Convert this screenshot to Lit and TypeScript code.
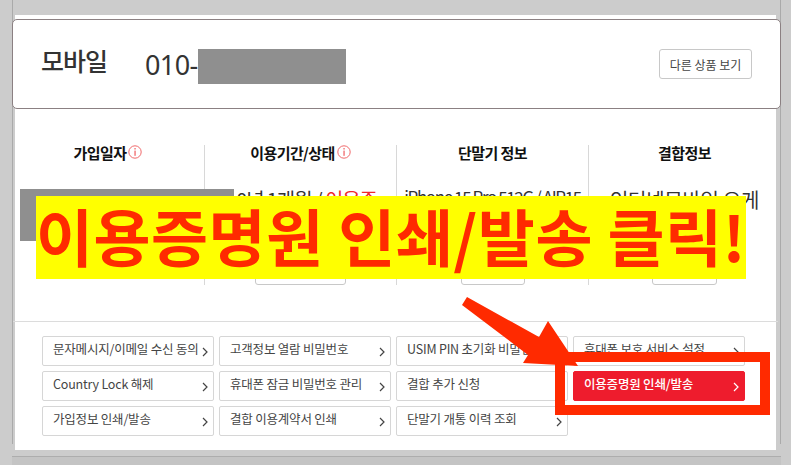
import { LitElement, html, css } from "lit";
import { customElement } from "lit/decorators.js";

const INFO = html`<svg class="info" viewBox="0 0 14 14" width="14" height="14"><circle cx="7" cy="7" r="6.2" fill="none" stroke="#f0696b" stroke-width="1"/><rect x="6.4" y="3" width="1.3" height="1.5" fill="#f0696b"/><rect x="6.4" y="5.6" width="1.3" height="5.2" fill="#f0696b"/></svg>`;
const CHEVRON = html`<svg class="chev" viewBox="0 0 6 10" width="6" height="10"><path d="M1 1l4 4-4 4" fill="none" stroke="currentColor" stroke-width="1.2"/></svg>`;

const ROWS: [string, boolean?][] = [
  ["문자메시지/이메일 수신 동의"], ["고객정보 열람 비밀번호"], ["USIM PIN 초기화 비밀번호"], ["휴대폰 보호 서비스 설정"],
  ["Country Lock 해제"], ["휴대폰 잠금 비밀번호 관리"], ["결합 추가 신청"], ["이용증명원 인쇄/발송", true],
  ["가입정보 인쇄/발송"], ["결합 이용계약서 인쇄"], ["단말기 개통 이력 조회"],
];

@customElement("app-root")
export class AppRoot extends LitElement {
  static styles = css`
    :host { display: block; width: 791px; height: 465px; background: #ccc; position: relative; overflow: hidden; font-family: "Noto Sans CJK KR", "Noto Sans", sans-serif; color: #333; }
    .frame { width: 769px; height: 444px; margin-left: 12px; border-left: 1px solid #aaa; border-right: 1px solid #aaa; box-sizing: border-box; padding: 15px 4px 0 2px; }
    .card { background: #fff; height: 435px; display: flex; flex-direction: column; }
    .head { margin: 4px -5px 0 -3px; height: 90px; flex: none; box-sizing: border-box; border: 1px solid #8b8082; border-radius: 5px; display: flex; align-items: center; padding: 0 28px 0 28px; background: #fff; }
    .head h1 { margin: 0 22px 9px 0; font-size: 25px; font-weight: 500; letter-spacing: -1px; color: #333; width: 82px; white-space: nowrap; }
    .num { font-size: 27px; line-height: 35px; letter-spacing: -0.6px; color: #333; font-family: "Noto Sans", sans-serif; display: flex; align-items: center; margin: 4px 0 0 0; }
    .num span { padding-bottom: 4px; }
    .mask { display: block; width: 148px; height: 35px; background: #8f8f8f; }
    .other { margin-left: auto; width: 93px; height: 30px; box-sizing: border-box; border: 1px solid #c8c8c8; border-radius: 3px; font-size: 12px; display: flex; align-items: center; justify-content: center; color: #444; background: #fff; }
    .cols { display: grid; grid-template-columns: 189px 192px 192px 1fr; margin-top: 36px; height: 140px; flex: none; }
    .col { border-left: 1px solid #d8d8d8; display: flex; flex-direction: column; align-items: center; position: relative; min-width: 0; }
    .col:first-child { border-left: none; padding-right: 3px; }
    .col:last-child { padding-left: 4px; }
    .col h2 { margin: -2px 0 0; font-size: 15px; line-height: 20px; font-weight: 700; color: #111; letter-spacing: -0.6px; display: flex; gap: 2px; align-items: flex-start; white-space: nowrap; }
    .info { margin-top: 2px; }
    .val { margin-top: 23px; font-size: 20px; line-height: 28px; white-space: nowrap; letter-spacing: -1.1px; color: #333; }
    .val em { color: #f0262c; font-style: normal; }
    .val.period { margin-left: 12px; }
    .val.small { margin-top: 20px; font-size: 17px; letter-spacing: -1.4px; }
    .val.wide { letter-spacing: -0.3px; }
    .ghost { position: absolute; bottom: 0; height: 40px; border: 1px solid #c8c8c8; border-radius: 3px; box-sizing: border-box; background: #fff; }
    .blur { position: absolute; left: 5px; top: 44px; width: 214px; height: 52px; background: #8f8f8f; z-index: 2; }
    .actions { border-top: 1px solid #dcdcdc; margin: 36px -2px 0 -2px; padding: 14px 31px 0 29px; display: grid; grid-template-columns: repeat(4, 172px); grid-auto-rows: 30px; gap: 5px; }
    .btn { box-sizing: border-box; border: 1px solid #d6d6d6; border-radius: 2px; display: flex; align-items: center; justify-content: space-between; padding: 0 5px 0 10px; font-size: 12.5px; letter-spacing: -0.2px; color: #444; white-space: nowrap; overflow: hidden; background: #fff; }
    .btn span { padding-bottom: 6px; }
    .btn.on { background: #ee1c2d; border-color: #ee1c2d; color: #fff; font-weight: 500; }
    .chev { flex: none; color: #444; margin-top: 2px; }
    .on .chev { color: #fff; }
    .foot { position: absolute; left: 12px; right: 10px; top: 456px; bottom: 0; background: #c4c4c4; border-top: 1px solid #adadad; }
    .banner { position: absolute; left: 36px; top: 196px; width: 710px; height: 83px; background: #ff0; color: #ff2a00; font-size: 62px; font-weight: 700; line-height: 79px; text-align: center; white-space: nowrap; letter-spacing: 0.5px; overflow: hidden; z-index: 3; }
    .ann { position: absolute; left: 0; top: 0; z-index: 4; pointer-events: none; }
  `;
  render() {
    return html`
      <div class="frame"><div class="card">
        <div class="head">
          <h1>모바일</h1>
          <div class="num"><span>010-</span><div class="mask"></div></div>
          <div class="other">다른 상품 보기</div>
        </div>
        <div class="cols">
          <div class="col"><h2>가입일자${INFO}</h2><div class="blur"></div></div>
          <div class="col"><h2>이용기간/상태${INFO}</h2><div class="val period">0년 1개월 / <em>이용중</em></div><div class="ghost" style="left:50px;width:91px"></div></div>
          <div class="col"><h2>단말기 정보</h2><div class="val small">iPhone 15 Pro 512G / AIP15</div><div class="ghost" style="left:64px;width:64px"></div></div>
          <div class="col"><h2>결합정보</h2><div class="val wide">인터넷모바일 요게</div><div class="ghost" style="left:63px;width:65px"></div></div>
        </div>
        <div class="actions">
          ${ROWS.map(([t, on]) => html`<div class="btn ${on ? "on" : ""}"><span>${t}</span>${CHEVRON}</div>`)}
        </div>
      </div></div>
      <div class="foot"></div>
      <div class="banner">이용증명원 인쇄/발송 클릭!</div>
      <svg class="ann" width="791" height="465" viewBox="0 0 791 465">
        <path d="M555 352H770V415H555ZM565 362V405H760V362Z" fill="#ff2a00" fill-rule="evenodd"/>
        <path d="M462 305L467 297L539 337L548 321L578 366L523 363L528 355Z" fill="#ff2a00"/>
      </svg>`;
  }
}
